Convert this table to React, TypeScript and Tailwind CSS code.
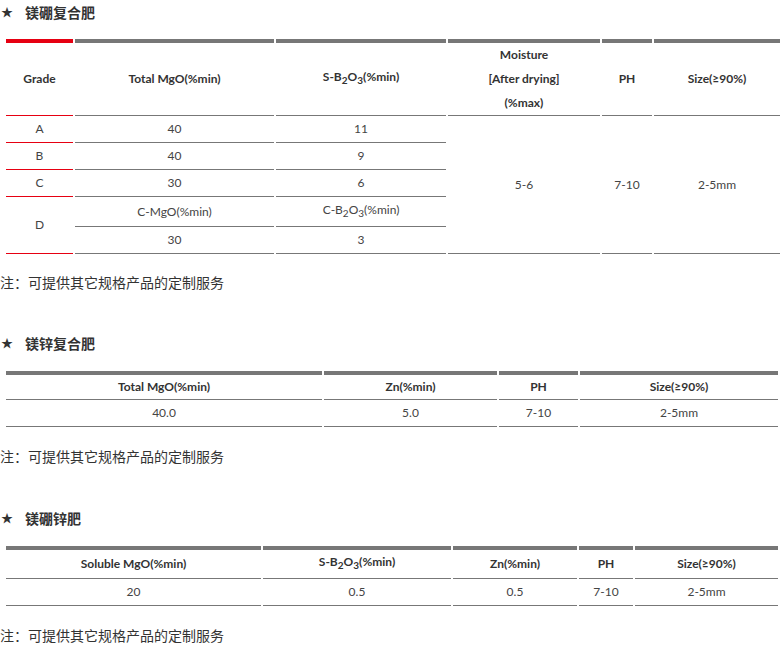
import React from "react";

const RED = "border-[#e60012]";
const GRAY = "border-[#777777]";

function Sub({ children }: { children: React.ReactNode }) {
  return <span className="align-sub text-[10px]">{children}</span>;
}

function Title({ text }: { text: string }) {
  return (
    <div className="flex items-center h-6 leading-6 text-[#333] font-['Noto_Sans_CJK_SC',sans-serif]">
      <span className="w-[25px] text-[12px] pl-[1px]">★</span>
      <span className="text-[14px] font-bold">{text}</span>
    </div>
  );
}

function Note() {
  return (
    <div className="h-6 leading-6 text-[14px] text-[#333] font-['Noto_Sans_CJK_SC',sans-serif]">
      注：可提供其它规格产品的定制服务
    </div>
  );
}

const th = `border-t-4 border-b ${GRAY} p-0 leading-6 align-middle text-center font-bold text-[12px] text-[#333]`;
const thRed = `border-t-4 border-b ${RED} p-0 leading-6 align-middle text-center font-bold text-[12px] text-[#333]`;
const td = `border-b ${GRAY} py-px px-0 leading-6 align-middle text-center text-[12px] text-[#444]`;
const tdRed = `border-b ${RED} py-px px-0 leading-6 align-middle text-center text-[12px] text-[#444]`;

export default function App() {
  return (
    <div className="w-[780px] overflow-hidden bg-white font-['Lato','Noto_Sans_CJK_SC',sans-serif]">
      <Title text="镁硼复合肥" />
      <table className="mt-[15px] ml-1 w-[778px] table-fixed border-separate border-spacing-x-0.5 border-spacing-y-0">
        <thead>
          <tr>
            <th className={`${thRed} w-[67px]`}>Grade</th>
            <th className={`${th} w-[199px]`}>Total MgO(%min)</th>
            <th className={`${th} w-[170px]`}>
              S-B<Sub>2</Sub>O<Sub>3</Sub>(%min)
            </th>
            <th className={`${th} w-[152px]`}>
              Moisture
              <br />
              [After drying]
              <br />
              (%max)
            </th>
            <th className={`${th} w-[50px]`}>PH</th>
            <th className={`${th} w-[126px]`}>Size(≥90%)</th>
          </tr>
        </thead>
        <tbody>
          <tr>
            <td className={tdRed}>A</td>
            <td className={td}>40</td>
            <td className={td}>11</td>
            <td className={td} rowSpan={5}>5-6</td>
            <td className={td} rowSpan={5}>7-10</td>
            <td className={td} rowSpan={5}>2-5mm</td>
          </tr>
          <tr>
            <td className={tdRed}>B</td>
            <td className={td}>40</td>
            <td className={td}>9</td>
          </tr>
          <tr>
            <td className={tdRed}>C</td>
            <td className={td}>30</td>
            <td className={td}>6</td>
          </tr>
          <tr>
            <td className={tdRed} rowSpan={2}>D</td>
            <td className={td}>C-MgO(%min)</td>
            <td className={td}>
              C-B<Sub>2</Sub>O<Sub>3</Sub>(%min)
            </td>
          </tr>
          <tr>
            <td className={td}>30</td>
            <td className={td}>3</td>
          </tr>
        </tbody>
      </table>
      <div className="mt-4">
        <Note />
      </div>

      <div className="mt-[37px]">
        <Title text="镁锌复合肥" />
      </div>
      <table className="mt-4 ml-1 w-[776px] table-fixed border-separate border-spacing-x-0.5 border-spacing-y-0">
        <thead>
          <tr>
            <th className={`${th} w-[316px]`}>Total MgO(%min)</th>
            <th className={`${th} w-[173px]`}>Zn(%min)</th>
            <th className={`${th} w-[79px]`}>PH</th>
            <th className={`${th} w-[198px]`}>Size(≥90%)</th>
          </tr>
        </thead>
        <tbody>
          <tr>
            <td className={td}>40.0</td>
            <td className={td}>5.0</td>
            <td className={td}>7-10</td>
            <td className={td}>2-5mm</td>
          </tr>
        </tbody>
      </table>
      <div className="mt-[17px]">
        <Note />
      </div>

      <div className="mt-[38px]">
        <Title text="镁硼锌肥" />
      </div>
      <table className="mt-4 ml-1 w-[776px] table-fixed border-separate border-spacing-x-0.5 border-spacing-y-0">
        <thead>
          <tr>
            <th className={`${th} w-[255px]`}>Soluble MgO(%min)</th>
            <th className={`${th} w-[188px]`}>
              S-B<Sub>2</Sub>O<Sub>3</Sub>(%min)
            </th>
            <th className={`${th} w-[124px]`}>Zn(%min)</th>
            <th className={`${th} w-[54px]`}>PH</th>
            <th className={`${th} w-[143px]`}>Size(≥90%)</th>
          </tr>
        </thead>
        <tbody>
          <tr>
            <td className={td}>20</td>
            <td className={td}>0.5</td>
            <td className={td}>0.5</td>
            <td className={td}>7-10</td>
            <td className={td}>2-5mm</td>
          </tr>
        </tbody>
      </table>
      <div className="mt-[17px]">
        <Note />
      </div>
    </div>
  );
}
